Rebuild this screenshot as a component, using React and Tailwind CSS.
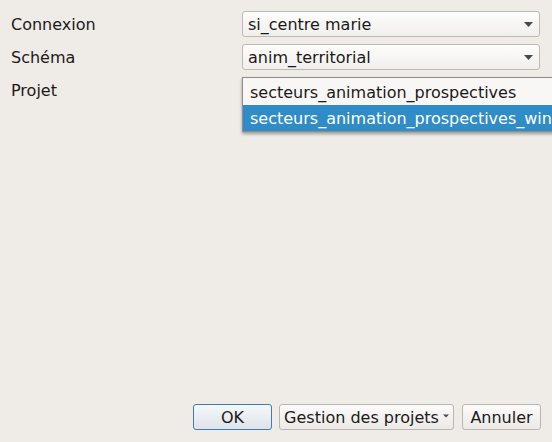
import React from 'react'

function Arrow({ small }) {
  return (
    <svg width={small ? 6 : 9} height={small ? 4 : 5} viewBox={small ? '0 0 6 4' : '0 0 9 5'} className="shrink-0">
      <path d={small ? 'M0 0.5h6L3 3.5z' : 'M0 0h9L4.5 5z'} fill="#4a4846" />
    </svg>
  )
}

function Combo({ value }) {
  return (
    <div className="h-[26px] w-[298px] flex items-center justify-between pl-[5px] pr-[6px] rounded-[3px] border border-[#bdb9b5] bg-gradient-to-b from-[#fdfdfc] to-[#f1efed] shadow-[inset_0_1px_0_#ffffff]">
      <span className="pt-[2px]">{value}</span>
      <Arrow />
    </div>
  )
}

function Button({ children, primary, menu, className = '' }) {
  return (
    <button
      className={
        'h-[26px] flex items-center justify-center rounded-[3px] border ' +
        (primary
          ? 'border-[#3e7cb2] bg-gradient-to-b from-[#f6f8fa] to-[#dde3ea] '
          : 'border-[#bab6b2] bg-gradient-to-b from-[#fcfbfb] to-[#ece9e6] ') +
        className
      }
    >
      <span className="pt-[2px]">{children}</span>
      {menu && <span className="ml-[4px] mt-[-2px]"><Arrow small /></span>}
    </button>
  )
}

export default function App() {
  return (
    <div
      className="w-[552px] h-[442px] overflow-hidden bg-[#efebe7] text-[16px] leading-none text-[#1b1a19] flex flex-col"
      style={{ fontFamily: '"DejaVu Sans", sans-serif' }}
    >
      <div className="grid grid-cols-[231px_1fr] gap-y-[7px] pt-[11px] pl-[11px]">
        <div className="h-[26px] flex items-center pt-[2px]">Connexion</div>
        <Combo value="si_centre marie" />
        <div className="h-[26px] flex items-center pt-[2px]">Schéma</div>
        <Combo value="anim_territorial" />
        <div className="h-[26px] flex items-center pt-[2px]">Projet</div>
        <div className="relative h-[26px]">
          <Combo value="" />
          <div className="absolute left-0 top-0 w-[340px] border border-[#8f8c89] bg-[#f8f7f6] shadow-[0_2px_3px_rgba(0,0,0,0.35)] z-10">
            <div className="h-[27px] flex items-center pl-[7px] pt-[2px] whitespace-nowrap">secteurs_animation_prospectives</div>
            <div className="h-[26px] flex items-center pl-[7px] pt-[2px] whitespace-nowrap bg-[#308cc6] text-white">secteurs_animation_prospectives_win</div>
          </div>
        </div>
      </div>
      <div className="flex-1" />
      <div className="flex justify-end gap-[7px] pr-[11px] pb-[12px]">
        <Button primary className="w-[79px]">OK</Button>
        <Button menu className="w-[175px]">Gestion des projets</Button>
        <Button className="w-[79px] ml-[1px]">Annuler</Button>
      </div>
    </div>
  )
}
